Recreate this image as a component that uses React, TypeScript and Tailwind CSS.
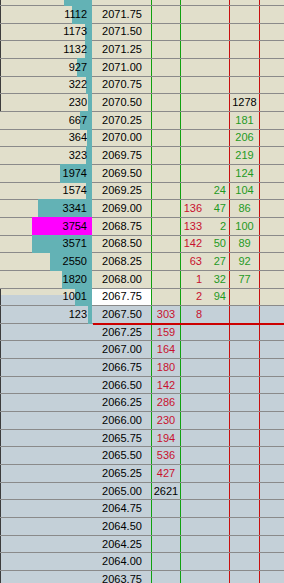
import React from "react";
import clsx from "clsx";

type Tone = "r" | "g" | "k";

interface Level {
  vol?: string;
  bar?: number;
  c3?: [string, Tone];
  r4?: string;
  g4?: string;
  c5?: [string, Tone];
}

const tone: Record<Tone, string> = {
  r: "text-[#c8102e]",
  g: "text-[#1f9a1f]",
  k: "text-black",
};

// ladder rows from 2072.00 downward, one tick (0.25) each
const levels: Level[] = [
  { vol: "1141", bar: 28 },
  { vol: "1112", bar: 20 },
  { vol: "1173", bar: 7 },
  { vol: "1132", bar: 7 },
  { vol: "927", bar: 15 },
  { vol: "322", bar: 6 },
  { vol: "230", bar: 4, c5: ["1278", "k"] },
  { vol: "667", bar: 12, c5: ["181", "g"] },
  { vol: "364", bar: 5, c5: ["206", "g"] },
  { vol: "323", bar: 6, c5: ["219", "g"] },
  { vol: "1974", bar: 32, c5: ["124", "g"] },
  { vol: "1574", bar: 6, g4: "24", c5: ["104", "g"] },
  { vol: "3341", bar: 54, r4: "136", g4: "47", c5: ["86", "g"] },
  { vol: "3754", bar: 60, r4: "133", g4: "2", c5: ["100", "g"] },
  { vol: "3571", bar: 60, r4: "142", g4: "50", c5: ["89", "g"] },
  { vol: "2550", bar: 42, r4: "63", g4: "27", c5: ["92", "g"] },
  { vol: "1820", bar: 30, r4: "1", g4: "32", c5: ["77", "g"] },
  { vol: "1001", bar: 17, r4: "2", g4: "94" },
  { vol: "123", bar: 4, c3: ["303", "r"], r4: "8" },
  { c3: ["159", "r"] },
  { c3: ["164", "r"] },
  { c3: ["180", "r"] },
  { c3: ["142", "r"] },
  { c3: ["286", "r"] },
  { c3: ["230", "r"] },
  { c3: ["194", "r"] },
  { c3: ["536", "r"] },
  { c3: ["427", "r"] },
  { c3: ["2621", "k"] },
  {},
  {},
  {},
  {},
  {},
  {},
  {},
];

const LAST = 18; // last traded row

function Rule({ red }: { red?: boolean }) {
  return <div className={clsx("w-px shrink-0", red ? "bg-[#c80f0f]" : "bg-[#10a010]")} />;
}

function LadderRow({ i, lv }: { i: number; lv: Level }) {
  const price = (2072 - i * 0.25).toFixed(2);
  const framed = i <= 6 || i >= 17;
  return (
    <div
      className={clsx(
        "flex h-[17.66px] shrink-0 border-b border-[#8a8a8a]",
        i < 18 ? "bg-[#e1dfcb]" : "bg-[#c4d0d8]",
        i === LAST && "relative"
      )}
    >
      {/* volume profile */}
      <div
        className={clsx(
          "relative flex w-[92px] shrink-0 items-center justify-end pr-[5px]",
          framed && "border-l border-[#3c3c3c]",
          i === 17 && "bg-[linear-gradient(to_bottom,#e1dfcb_6px,#c4d0d8_6px)]"
        )}
      >
        {lv.bar ? (
          <div
            className={clsx(
              "absolute right-0 -top-px -bottom-px",
              i === 13 ? "bg-[#ff00ff]" : "bg-[#63b2b5]"
            )}
            style={{ width: lv.bar }}
          />
        ) : null}
        <span className="relative">{lv.vol}</span>
      </div>

      {/* price */}
      <div
        className={clsx(
          "flex w-[59px] shrink-0 items-center justify-center pl-px",
          i === 17 && "bg-white"
        )}
      >
        {price}
      </div>
      <Rule />

      <div className="flex w-[28px] shrink-0 items-center justify-center">
        {lv.c3 && <span className={tone[lv.c3[1]]}>{lv.c3[0]}</span>}
      </div>
      <Rule />

      <div className="flex w-[48px] shrink-0 items-center">
        <span className="w-[21px] text-right text-[#c8102e]">{lv.r4}</span>
        <span className="w-[24px] text-right text-[#1f9a1f]">{lv.g4}</span>
      </div>
      <Rule red />

      <div className="flex w-[29px] shrink-0 items-center justify-center">
        {lv.c5 && <span className={tone[lv.c5[1]]}>{lv.c5[0]}</span>}
      </div>
      <Rule red />

      <div className="flex-1" />

      {i === LAST && (
        <div className="absolute left-[93px] right-0 -bottom-[2px] h-[2px] bg-[#cc0000]" />
      )}
    </div>
  );
}

export default function App() {
  return (
    <div className="h-[583px] w-[284px] overflow-hidden bg-[#c4d0d8] font-['Liberation_Sans',Arial,sans-serif] text-[11px] leading-none text-black">
      <div className="-mt-[11.66px] flex flex-col">
        {levels.map((lv, i) => (
          <LadderRow key={i} i={i} lv={lv} />
        ))}
      </div>
    </div>
  );
}
